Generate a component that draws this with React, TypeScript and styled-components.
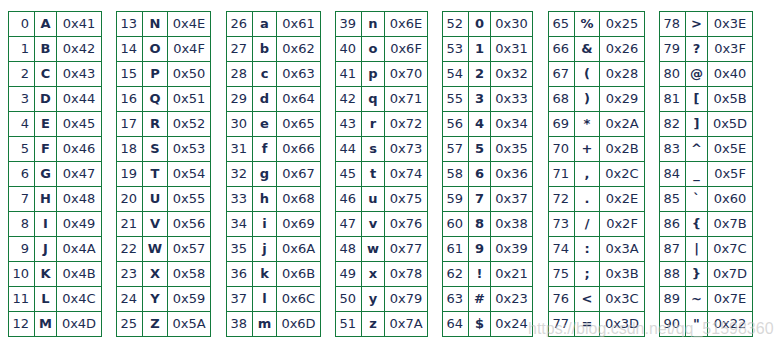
import React from 'react';
import styled, { createGlobalStyle } from 'styled-components';

const GlobalStyle = createGlobalStyle`
    body {
        margin: 0;
        background: #ffffff;
        font-family: 'DejaVu Sans', Verdana, sans-serif;
    }
`;

const Page = styled.div`
    position: relative;
    display: flex;
    align-items: flex-start;
    padding: 11px 0 0 8px;
    width: 782px;
    height: 351px;
    box-sizing: border-box;
    overflow: hidden;
`;

const AsciiTable = styled.table<{ $gap: number }>`
    border-collapse: separate;
    border-spacing: 0;
    border-top: 1px solid #137a3c;
    border-left: 1px solid #137a3c;
    margin-left: ${(props) => props.$gap}px;
    flex: none;
`;

const Cell = styled.td<{ $width: number; $align: string; $bold?: boolean }>`
    box-sizing: border-box;
    width: ${(props) => props.$width}px;
    min-width: ${(props) => props.$width}px;
    max-width: ${(props) => props.$width}px;
    height: 25px;
    padding: 0 ${(props) => (props.$align === 'right' ? 5 : 0)}px 0 0;
    border-right: 1px solid #137a3c;
    border-bottom: 1px solid #137a3c;
    font-size: 13px;
    line-height: 24px;
    color: #1c2c52;
    text-align: ${(props) => props.$align};
    font-weight: ${(props) => (props.$bold ? 700 : 400)};
    white-space: nowrap;
    overflow: visible;
`;

const Watermark = styled.div`
    position: absolute;
    left: 528px;
    top: 320px;
    font-family: 'Liberation Sans', Arial, sans-serif;
    font-size: 16px;
    color: rgba(190, 190, 190, 0.6);
    pointer-events: none;
`;

const charsets = [
    'ABCDEFGHIJKLM',
    'NOPQRSTUVWXYZ',
    'abcdefghijklm',
    'nopqrstuvwxyz',
    '0123456789!#$',
    '%&()*+,./:;<=',
    '>?@[]^_`{|}~"',
];

const layouts = [
    { gap: 0, widths: [26, 22, 45] },
    { gap: 14, widths: [26, 25, 43] },
    { gap: 15, widths: [26, 24, 44] },
    { gap: 14, widths: [26, 23, 43] },
    { gap: 14, widths: [26, 22, 42] },
    { gap: 15, widths: [26, 25, 45] },
    { gap: 14, widths: [26, 22, 45] },
];

const toHex = (ch: string) => '0x' + ch.charCodeAt(0).toString(16).toUpperCase();

export default function App() {
    return (
        <Page>
            <GlobalStyle />
            {charsets.map((set, t) => {
                const { gap, widths } = layouts[t];
                return (
                    <AsciiTable key={t} $gap={gap}>
                        <tbody>
                            {set.split('').map((ch, i) => (
                                <tr key={ch}>
                                    <Cell $width={widths[0]} $align="right">
                                        {t * 13 + i}
                                    </Cell>
                                    <Cell $width={widths[1]} $align="center" $bold>
                                        {ch}
                                    </Cell>
                                    <Cell $width={widths[2]} $align="center">
                                        {toHex(ch)}
                                    </Cell>
                                </tr>
                            ))}
                        </tbody>
                    </AsciiTable>
                );
            })}
            <Watermark>https://blog.csdn.net/qq_51598360</Watermark>
        </Page>
    );
}
